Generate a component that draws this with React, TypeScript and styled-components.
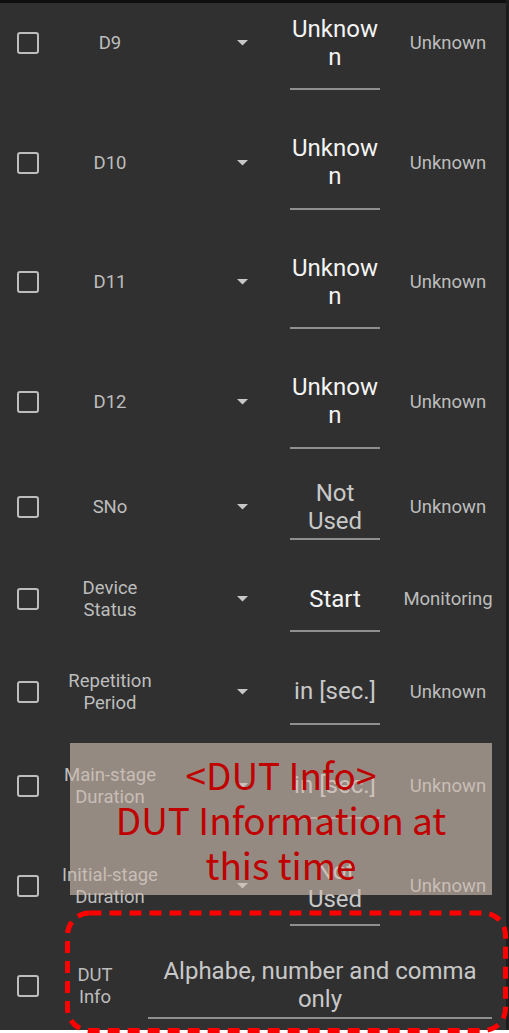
import React from "react";
import styled, { createGlobalStyle } from "styled-components";

const Global = createGlobalStyle`
  html, body { margin: 0; padding: 0; background: #ffffff; }
  body { font-family: Roboto, "Liberation Sans", sans-serif; }
`;

const Slide = styled.div`
  position: relative;
  width: 509px;
  height: 1033px;
  overflow: hidden;
  background: #ffffff;
`;

const Screen = styled.div`
  width: 506px;
  height: 1030px;
  overflow: hidden;
  background: #303030;
  border-right: 3px solid #1c1c1c;
  display: flex;
  flex-direction: column;
`;

const StatusEdge = styled.div`
  height: 3px;
  flex: none;
  background: #0e0e0e;
  position: relative;
  z-index: 1;
`;

const List = styled.div`
  margin-top: -20px;
  display: flex;
  flex-direction: column;
`;

const Row = styled.div<{ $h: number }>`
  height: ${(p) => p.$h}px;
  flex: none;
  display: grid;
  grid-template-columns: 56px 108px 126px 90px 1fr;
  align-items: center;
`;

const DutRow = styled.div<{ $h: number }>`
  height: ${(p) => p.$h}px;
  flex: none;
  display: grid;
  grid-template-columns: 56px 78px 1fr;
  align-items: center;
`;

const CheckCell = styled.div`
  display: flex;
  justify-content: center;
  align-items: center;
`;

const Check = styled.div`
  width: 22px;
  height: 22px;
  box-sizing: border-box;
  border: 2.5px solid #bdbdbd;
  border-radius: 3px;
`;

const Label = styled.div`
  color: #bdbdbd;
  font-size: 18.5px;
  line-height: 22px;
  text-align: center;
  white-space: pre-line;
`;

const ArrowCell = styled.div`
  display: flex;
  justify-content: flex-end;
  align-items: center;
  padding-right: 42px;
`;

const Field = styled.div<{ $h: number; $wide?: boolean }>`
  height: ${(p) => p.$h}px;
  box-sizing: border-box;
  border-bottom: 2px solid #8f8f8f;
  display: flex;
  flex-direction: column;
  justify-content: center;
  align-items: center;
  ${(p) => (p.$wide ? "margin: 0 14px;" : "")}
`;

const FieldText = styled.div<{ $tone: "value" | "hint"; $words?: boolean }>`
  color: ${(p) => (p.$tone === "value" ? "#f4f4f4" : "#c8c8c8")};
  font-size: 24px;
  line-height: 28px;
  text-align: center;
  word-break: ${(p) => (p.$words ? "normal" : "break-all")};
  white-space: pre-line;
  padding-top: 1px;
`;

const Status = styled.div`
  color: #bdbdbd;
  font-size: 18.5px;
  text-align: center;
  padding-left: 10px;
`;

const InfoBox = styled.div`
  position: absolute;
  left: 70px;
  top: 743px;
  width: 422px;
  height: 152px;
  background: rgba(206, 189, 176, 0.64);
  display: flex;
  flex-direction: column;
  align-items: center;
  justify-content: center;
  color: #c00000;
  font-family: "Noto Sans CJK KR", "Noto Sans", sans-serif;
  font-size: 37px;
  line-height: 45px;
  text-align: center;
`;

const DashFrame = styled.svg`
  position: absolute;
  left: 62px;
  top: 908px;
  overflow: visible;
`;

const ArrowIcon = () => (
  <svg width="11" height="6" viewBox="0 0 11 6">
    <polygon points="0,0 11,0 5.5,5.5" fill="#c8c8c8" />
  </svg>
);

type RowData = {
  label: string;
  value: string;
  tone: "value" | "hint";
  status: string;
  h: number;
  fh: number;
};

const rows: RowData[] = [
  { label: "D9", value: "Unknown", tone: "value", status: "Unknown", h: 120, fh: 94 },
  { label: "D10", value: "Unknown", tone: "value", status: "Unknown", h: 119, fh: 94 },
  { label: "D11", value: "Unknown", tone: "value", status: "Unknown", h: 120, fh: 94 },
  { label: "D12", value: "Unknown", tone: "value", status: "Unknown", h: 119, fh: 94 },
  { label: "SNo", value: "Not\nUsed", tone: "hint", status: "Unknown", h: 92, fh: 66 },
  { label: "Device\nStatus", value: "Start", tone: "value", status: "Monitoring", h: 92, fh: 66 },
  { label: "Repetition\nPeriod", value: "in [sec.]", tone: "hint", status: "Unknown", h: 93, fh: 66 },
  { label: "Main-stage\nDuration", value: "in [sec.]", tone: "hint", status: "Unknown", h: 95, fh: 66 },
  { label: "Initial-stage\nDuration", value: "Not\nUsed", tone: "hint", status: "Unknown", h: 105, fh: 80 },
];

export default function App() {
  return (
    <>
      <Global />
      <Slide>
        <Screen>
          <StatusEdge />
          <List>
            {rows.map((r) => (
              <Row key={r.label} $h={r.h}>
                <CheckCell>
                  <Check />
                </CheckCell>
                <Label>{r.label}</Label>
                <ArrowCell>
                  <ArrowIcon />
                </ArrowCell>
                <Field $h={r.fh}>
                  <FieldText $tone={r.tone}>{r.value}</FieldText>
                </Field>
                <Status>{r.status}</Status>
              </Row>
            ))}
            <DutRow $h={95}>
              <CheckCell>
                <Check />
              </CheckCell>
              <Label>{"DUT\nInfo"}</Label>
              <Field $h={66} $wide>
                <FieldText $tone="hint" $words>
                  Alphabe, number and comma only
                </FieldText>
              </Field>
            </DutRow>
          </List>
        </Screen>
        <InfoBox>
          <div>&lt;DUT Info&gt;</div>
          <div>DUT Information at</div>
          <div>this time</div>
        </InfoBox>
        <DashFrame width="448" height="126" viewBox="0 0 448 126">
          <rect
            x="5.5"
            y="5"
            width="438"
            height="117.5"
            rx="22"
            fill="none"
            stroke="#ff0000"
            strokeWidth="5"
            strokeDasharray="12 8"
          />
        </DashFrame>
      </Slide>
    </>
  );
}
